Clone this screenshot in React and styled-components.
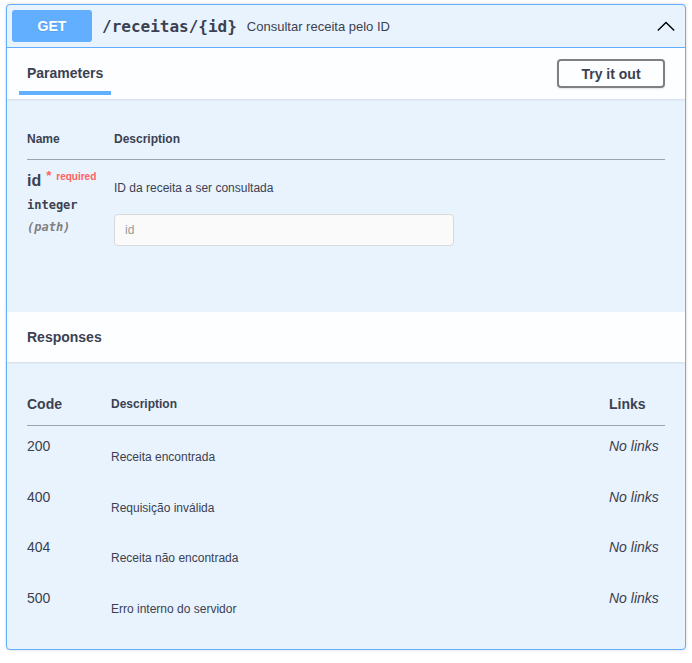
import React from "react";
import styled, { createGlobalStyle } from "styled-components";

const Global = createGlobalStyle`
  body {
    margin: 0;
    padding: 4px 6px;
    background: #fff;
    font-family: "Liberation Sans", Arial, sans-serif;
    color: #3b4151;
  }
`;

const Block = styled.div`
  border: 1px solid #61affe;
  border-radius: 4px;
  background: #e9f3fe;
  box-shadow: 0 0 3px rgba(0, 0, 0, 0.19);
  overflow: hidden;
`;

const Summary = styled.div`
  display: flex;
  align-items: center;
  padding: 5px;
  border-bottom: 1px solid #61affe;
`;

const Method = styled.span`
  width: 80px;
  height: 32px;
  display: flex;
  align-items: center;
  justify-content: center;
  background: #61affe;
  color: #fff;
  font-size: 14px;
  font-weight: 700;
  border-radius: 3px;
  text-shadow: 0 1px 0 rgba(0, 0, 0, 0.1);
`;

const Path = styled.span`
  margin-left: 10px;
  font-family: "DejaVu Sans Mono", monospace;
  font-weight: 700;
  font-size: 16px;
  color: #3b4151;
`;

const Desc = styled.span`
  margin-left: 10px;
  font-size: 13px;
  flex: 1;
`;

const Chevron = styled.svg`
  width: 20px;
  height: 20px;
  margin-right: 4px;
`;

const SectionHeader = styled.div`
  display: flex;
  align-items: center;
  justify-content: space-between;
  height: ${(p) => p.$h}px;
  padding: 0 20px;
  background: rgba(255, 255, 255, 0.85);
  box-shadow: 0 1px 2px rgba(0, 0, 0, 0.1);
  box-sizing: border-box;
`;

const SectionTitle = styled.h4`
  margin: 0;
  font-size: 14px;
  font-weight: 700;
  color: #3b4151;
`;

const Tab = styled(SectionTitle)`
  position: relative;
  top: -1px;
  &::after {
    content: "";
    position: absolute;
    left: -10%;
    width: 120%;
    bottom: -14px;
    height: 4px;
    background: #61affe;
  }
`;

const TryButton = styled.button`
  width: 108px;
  height: 29px;
  border: 2px solid #808080;
  border-radius: 4px;
  background: transparent;
  font-family: inherit;
  font-size: 14px;
  font-weight: 700;
  color: #3b4151;
  box-shadow: 0 1px 2px rgba(0, 0, 0, 0.1);
`;

const Body = styled.div`
  padding: ${(p) => p.$pad};
`;

const Grid = styled.div`
  display: grid;
  grid-template-columns: ${(p) => p.$cols};
`;

const HeadCell = styled.div`
  display: flex;
  align-items: center;
  height: ${(p) => p.$h}px;
  font-size: ${(p) => p.$size || 12}px;
  font-weight: 700;
  color: #3b4151;
  border-bottom: 1px solid #9ba3ad;
  box-sizing: border-box;
`;

const NameCell = styled.div`
  padding-top: 11px;
  display: flex;
  flex-direction: column;
`;

const ParamName = styled.div`
  display: flex;
  align-items: flex-start;
  font-size: 16px;
  font-weight: 700;
  line-height: 20px;
  color: #3b4151;
`;

const Required = styled.span`
  margin-left: 5px;
  margin-top: -2px;
  font-size: 10px;
  font-weight: 700;
  line-height: 14px;
  color: #ff6060;
  b {
    font-size: 13px;
    margin-right: 5px;
  }
`;

const Mono = styled.div`
  font-family: "DejaVu Sans Mono", monospace;
  font-size: 12px;
  font-weight: ${(p) => (p.$italic ? 600 : 700)};
  font-style: ${(p) => (p.$italic ? "italic" : "normal")};
  color: ${(p) => (p.$italic ? "#808080" : "#3b4151")};
  margin-top: ${(p) => p.$mt}px;
`;

const DescCell = styled.div`
  padding-top: 21px;
  font-size: 12px;
`;

const Input = styled.input`
  display: block;
  margin-top: 19px;
  width: 340px;
  height: 32px;
  box-sizing: border-box;
  padding: 0 10px;
  border: 1px solid #d9d9d9;
  border-radius: 4px;
  background: #fafafa;
  font-family: inherit;
  font-size: 12px;
  &::placeholder {
    color: #999;
  }
`;

const Cell = styled.div`
  height: 50.5px;
  padding-top: ${(p) => p.$top}px;
  box-sizing: border-box;
  font-size: ${(p) => p.$size}px;
  font-style: ${(p) => (p.$italic ? "italic" : "normal")};
  color: #3b4151;
  white-space: nowrap;
`;

const responses = [
  ["200", "Receita encontrada"],
  ["400", "Requisição inválida"],
  ["404", "Receita não encontrada"],
  ["500", "Erro interno do servidor"],
];

export default function App() {
  return (
    <>
      <Global />
      <Block>
        <Summary>
          <Method>GET</Method>
          <Path>/receitas/{"{id}"}</Path>
          <Desc>Consultar receita pelo ID</Desc>
          <Chevron viewBox="0 0 20 20">
            <path d="M1.8 14.6 L10 6.6 L18.2 14.6" fill="none" stroke="#000" strokeWidth="1.4" />
          </Chevron>
        </Summary>

        <SectionHeader $h={51}>
          <Tab>Parameters</Tab>
          <TryButton>Try it out</TryButton>
        </SectionHeader>

        <Body $pad="20px 20px 66px">
          <Grid $cols="87px 1fr">
            <HeadCell $h={41}>Name</HeadCell>
            <HeadCell $h={41}>Description</HeadCell>
            <NameCell>
              <ParamName>
                id
                <Required>
                  <b>*</b>required
                </Required>
              </ParamName>
              <Mono $mt={7}>integer</Mono>
              <Mono $mt={8} $italic>
                (path)
              </Mono>
            </NameCell>
            <DescCell>
              ID da receita a ser consultada
              <Input placeholder="id" />
            </DescCell>
          </Grid>
        </Body>

        <SectionHeader $h={50}>
          <SectionTitle>Responses</SectionTitle>
        </SectionHeader>

        <Body $pad="20px 20px 21px">
          <Grid $cols="84px 1fr 56px">
            <HeadCell $h={44} $size={14}>
              Code
            </HeadCell>
            <HeadCell $h={44}>Description</HeadCell>
            <HeadCell $h={44} $size={14}>
              Links
            </HeadCell>
            {responses.map(([code, text]) => (
              <React.Fragment key={code}>
                <Cell $top={12} $size={14}>
                  {code}
                </Cell>
                <Cell $top={24} $size={12}>
                  {text}
                </Cell>
                <Cell $top={12} $size={14} $italic>
                  No links
                </Cell>
              </React.Fragment>
            ))}
          </Grid>
        </Body>
      </Block>
    </>
  );
}
